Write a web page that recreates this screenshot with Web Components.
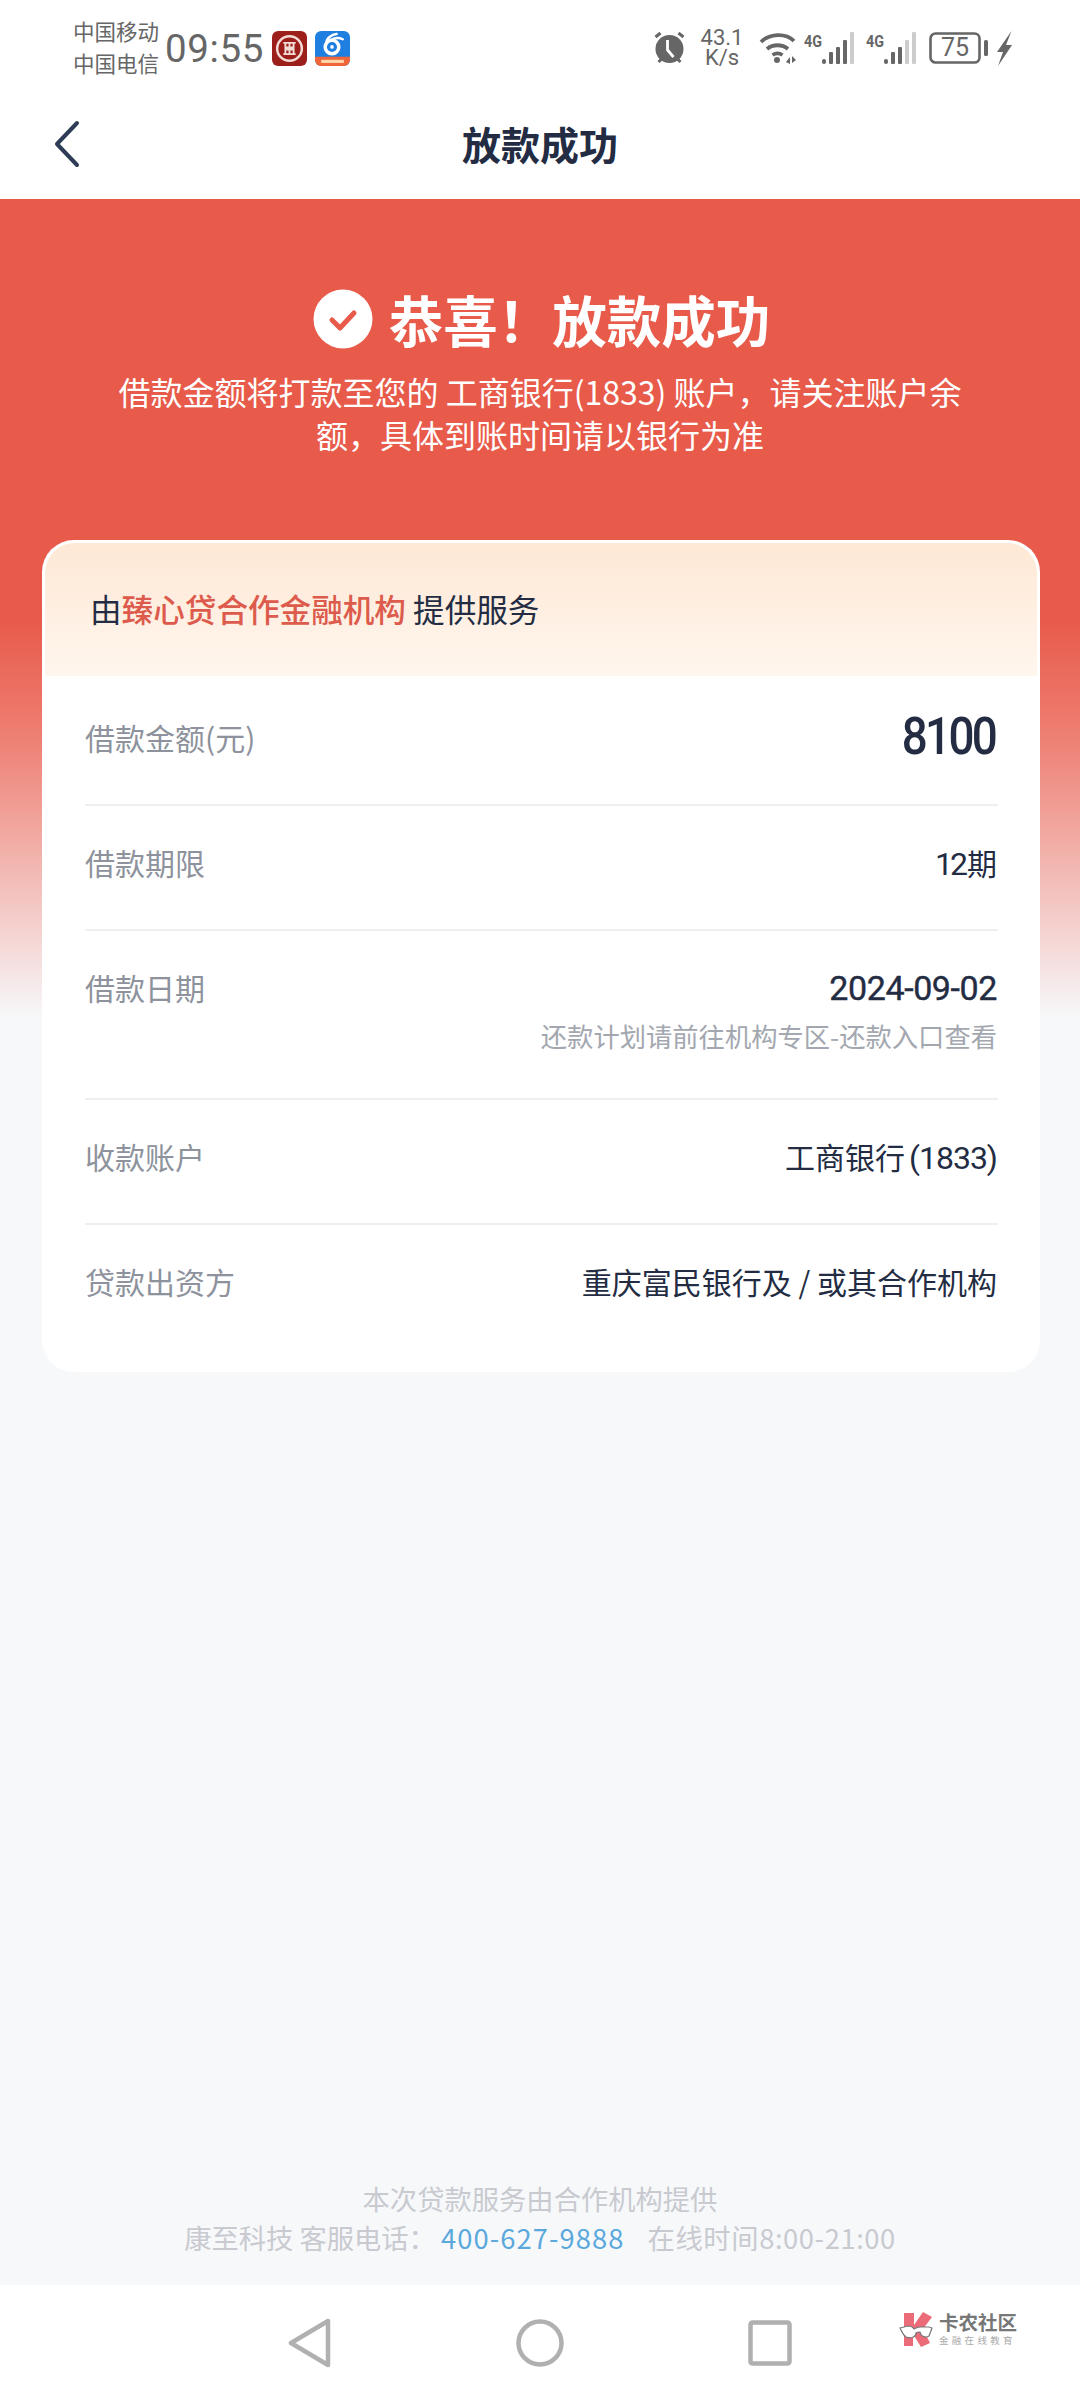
<!DOCTYPE html>
<html lang="zh">
<head>
<meta charset="utf-8">
<title>放款成功</title>
<style>
  html, body { margin: 0; height: 100%; }
  body {
    width: 1080px; height: 2400px; overflow: hidden;
    display: flex; flex-direction: column;
    background: #f7f8fa; color: #232c42;
    font-family: "Noto Sans CJK SC", "Noto Sans", sans-serif;
  }
</style>
</head>
<body>
<status-bar></status-bar>
<page-head>放款成功</page-head>
<loan-page>
  <success-hero slot="hero" title-text="恭喜！放款成功">
    借款金额将打款至您的 工商银行(1833) 账户，请关注账户余额，具体到账时间请以银行为准
  </success-hero>
  <loan-card slot="card" lender="臻心贷合作金融机构">
    <loan-row label="借款金额(元)" tall><loan-num big>8100</loan-num></loan-row>
    <loan-row label="借款期限"><loan-num tight>12</loan-num>期</loan-row>
    <loan-row label="借款日期" note="还款计划请前往机构专区-还款入口查看"><loan-num date>2024-09-02</loan-num></loan-row>
    <loan-row label="收款账户">工商银行<loan-num paren>(1833)</loan-num></loan-row>
    <loan-row label="贷款出资方" last>重庆富民银行及 / 或其合作机构</loan-row>
  </loan-card>
  <loan-foot slot="foot"></loan-foot>
</loan-page>
<nav-keys></nav-keys>

<script>
class StatusBar extends HTMLElement {
  constructor() {
    super();
    // five signal bars, the last ones dimmed
    const signal = lit => [5, 12, 17, 24, 32].map((h, i) =>
      `<rect x="${18 + i * 7}" y="${32 - h}" width="4" height="${h}" rx="${i ? 1 : 2}" fill="${i < lit ? '#666' : '#ccc'}"/>`
    ).join('');
    const sim = (lit, left) => `
      <svg width="50" height="32" viewBox="0 0 50 32" style="margin-left:${left}px">
        <text x="0" y="15" font-family="Roboto" font-weight="700" font-size="16" fill="#666" textLength="18" lengthAdjust="spacingAndGlyphs">4G</text>
        ${signal(lit)}
      </svg>`;
    this.attachShadow({mode: 'open'}).innerHTML = `
    <style>
      :host { display: flex; align-items: center; height: 90px; padding: 0 0 0 73px; background: #fff; color: #666; box-sizing: border-box; flex: none; }
      .sim { font-size: 21.5px; line-height: 32px; width: 92px; margin-top: 3px; white-space: nowrap; }
      .time { font: 38.5px/1 Roboto, sans-serif; letter-spacing: .6px; width: 107px; margin-top: 8px; }
      svg { display: block; flex: none; }
      .right { margin-left: auto; display: flex; align-items: center; padding-right: 68px; margin-top: 6px; }
      .speed { font: 22px/20px Roboto, sans-serif; text-align: center; width: 46px; margin: 0 14px 0 12px; }
      .batt { position: relative; margin-left: 13px; }
      .batt span { position: absolute; left: 0; width: 52px; top: 0; text-align: center; font: 25px/32px Roboto, sans-serif; }
    </style>
    <div class="sim">中国移动<br>中国电信</div>
    <div class="time">09:55</div>
    <svg width="35" height="35" viewBox="0 0 34 34" style="margin-top:6px">
      <rect width="34" height="34" rx="6" fill="#9c1f1c"/>
      <circle cx="17" cy="17" r="12" fill="none" stroke="#f4dcd6" stroke-width="2.4"/>
      <path d="M11 11.500h12M11 22.500h12M13 11.500v4.500h8v-4.500M13 22.500V18h8v4.500M17 11.500v11" fill="none" stroke="#f4dcd6" stroke-width="1.800"/>
    </svg>
    <svg width="35" height="35" viewBox="0 0 34 34" style="margin:6px 0 0 8px">
      <defs><clipPath id="a"><rect width="34" height="34" rx="6"/></clipPath></defs>
      <g clip-path="url(#a)">
        <rect width="34" height="34" fill="#1f7fe0"/>
        <rect y="25" width="34" height="9" fill="#f0663a"/>
        <circle cx="16.500" cy="15.500" r="6.600" fill="none" stroke="#fff" stroke-width="3.400"/>
        <circle cx="16.500" cy="15.500" r="1.800" fill="#fff"/>
        <path d="M11 12C11 7 16 3.500 21 3M16 8.500C20 6 24 6.500 27 8" fill="none" stroke="#fff" stroke-width="2.400" stroke-linecap="round"/>
        <rect x="6" y="28" width="22" height="3" fill="#ffd9a8"/>
      </g>
    </svg>
    <div class="right">
      <svg width="35" height="34" viewBox="0 0 34 34">
        <circle cx="17" cy="18" r="14" fill="#666"/>
        <path d="M15 9v10l6 7" fill="none" stroke="#fff" stroke-width="2.800"/>
        <path d="M3 6l5-4M31 6l-5-4M6 31l3-3M28 31l-3-3" stroke="#666" stroke-width="3" fill="none"/>
      </svg>
      <div class="speed">43.1<br>K/s</div>
      <svg width="38" height="32" viewBox="0 0 38 32">
        <path d="M2 10C11 1 27 1 35 9M8 17c6-5 15-5 21 0M13.500 23c3-2 7-2 10 0" fill="none" stroke="#666" stroke-width="3.800"/>
        <circle cx="18" cy="28" r="3" fill="#666"/>
        <path d="M27 30l4-5v7zM33 24l4 4-4 3z" fill="#666"/>
      </svg>
      ${sim(4, 7)}
      ${sim(3, 12)}
      <div class="batt">
        <svg width="59" height="32" viewBox="0 0 59 32">
          <rect x="1.500" y="1.500" width="49" height="29" rx="5" fill="none" stroke="#666" stroke-width="2.600"/>
          <rect x="55" y="8" width="4" height="16" rx="1.500" fill="#666"/>
        </svg>
        <span>75</span>
      </div>
      <svg width="15" height="35" viewBox="0 0 15 35" style="margin-left:9px">
        <path d="M14.500 0L0 21h6L1 35l14-21H9z" fill="#666"/>
      </svg>
    </div>`;
  }
}

class PageHead extends HTMLElement {
  constructor() {
    super();
    this.attachShadow({mode: 'open'}).innerHTML = `
    <style>
      :host { display: flex; align-items: center; justify-content: center; position: relative; height: 109px; background: #fff; flex: none; color: #232c42; }
      svg { position: absolute; left: 52px; top: 30px; }
      .t { font-size: 39px; font-weight: 700; line-height: 1; margin-top: -2px; }
    </style>
    <svg width="30" height="48" viewBox="0 0 30 48"><path d="M25 3L5 24l20 21" fill="none" stroke="#2f3c55" stroke-width="4" stroke-linecap="round" stroke-linejoin="round"/></svg>
    <div class="t"><slot></slot></div>`;
  }
}

class LoanPage extends HTMLElement {
  constructor() {
    super();
    this.attachShadow({mode: 'open'}).innerHTML = `
    <style>
      :host { display: flex; flex-direction: column; flex: 1; min-height: 0; background: linear-gradient(#e85a4a 0, #e85a4a 420px, #ee8074 540px, #f7f8fa 820px); }
      .foot { margin-top: auto; }
    </style>
    <slot name="hero"></slot>
    <slot name="card"></slot>
    <div class="foot"><slot name="foot"></slot></div>`;
  }
}

class SuccessHero extends HTMLElement {
  constructor() {
    super();
    this.attachShadow({mode: 'open'}).innerHTML = `
    <style>
      :host { display: block; height: 341px; box-sizing: border-box; padding-top: 90px; color: #fff; text-align: center; }
      .h { display: flex; justify-content: center; align-items: center; gap: 16px; height: 60px; padding-left: 3px; font-size: 54.500px; font-weight: 700; line-height: 60px; }
      svg { display: block; }
      p { margin: 21px auto 0; width: 860px; font-size: 32px; line-height: 43px; }
    </style>
    <div class="h">
      <svg width="60" height="60" viewBox="0 0 60 60"><circle cx="30" cy="30" r="29.500" fill="#fff"/><path d="M19 31l8 8 14-15" fill="none" stroke="#e85a4a" stroke-width="5" stroke-linecap="round" stroke-linejoin="round"/></svg>
      <span>${this.getAttribute('title-text')}</span>
    </div>
    <p><slot></slot></p>`;
  }
}

class LoanCard extends HTMLElement {
  constructor() {
    super();
    this.attachShadow({mode: 'open'}).innerHTML = `
    <style>
      :host { display: block; margin: 0 40px 0 42px; background: #fff; border-radius: 32px; overflow: hidden; height: 832px; }
      .head { height: 133px; box-sizing: border-box; margin: 3px 3px 0; padding: 0 0 4px 45px; display: flex; align-items: center; white-space: pre;
        border-radius: 30px 30px 0 0; font-size: 31.600px; background: linear-gradient(#fee8d5, #fff6ee); color: #232c42; }
      b { font-weight: 500; color: #dd5b4c; }
      .list { padding: 0 42px 0 43px; }
    </style>
    <div class="head">由<b>${this.getAttribute('lender')}</b> 提供服务</div>
    <div class="list"><slot></slot></div>`;
  }
}

class LoanNum extends HTMLElement {
  constructor() {
    super();
    this.attachShadow({mode: 'open'}).innerHTML = `
    <style>
      :host { font: 400 32px/1 Roboto, sans-serif; letter-spacing: -1px; }
      :host([tight]) { letter-spacing: -3px; margin-right: 2px; }
      :host([paren]) { margin-left: -3px; }
      :host([date]) { font-size: 34px; letter-spacing: -.4px; -webkit-text-stroke: .4px currentColor; }
      :host([big]) { display: block; font-size: 52px; font-weight: 500; letter-spacing: -3px; transform: scaleX(.88); transform-origin: right; margin: -2px 2px 0 0; line-height: 44px; }
    </style>
    <slot></slot>`;
  }
}

class LoanRow extends HTMLElement {
  constructor() {
    super();
    const note = this.getAttribute('note');
    this.attachShadow({mode: 'open'}).innerHTML = `
    <style>
      :host { display: flex; justify-content: space-between; align-items: flex-start; box-sizing: border-box; height: 125px; padding-top: 36px; border-bottom: 2px solid #eeeff1; }
      :host([tall]) { height: 130px; padding-top: 41px; }
      :host([note]) { height: 169px; }
      :host([last]) { border-bottom: 0; }
      .l { color: #8d929c; font-size: 30px; line-height: 40px; }
      .r { text-align: right; color: #232c42; font-size: 30px; line-height: 40px; margin-right: 1px; }
      .n { color: #a3a7af; font-size: 26.300px; line-height: 36px; margin-top: 11px; }
    </style>
    <div class="l">${this.getAttribute('label')}</div>
    <div class="r"><slot></slot>${note ? `<div class="n">${note}</div>` : ''}</div>`;
  }
}

class LoanFoot extends HTMLElement {
  constructor() {
    super();
    this.attachShadow({mode: 'open'}).innerHTML = `
    <style>
      :host { display: block; text-align: center; color: #c8cad0; font-size: 27.300px; line-height: 39px; padding-bottom: 28px; }
      a { color: #5ba8dc; margin: 0 23px 0 5px; letter-spacing: 1.100px; }
      span { letter-spacing: .6px; }
    </style>
    <div>本次贷款服务由合作机构提供</div>
    <div>康至科技 客服电话：<a>400-627-9888</a><span>在线时间8:00-21:00</span></div>`;
  }
}

class NavKeys extends HTMLElement {
  constructor() {
    super();
    this.attachShadow({mode: 'open'}).innerHTML = `
    <style>
      :host { display: flex; position: relative; justify-content: center; align-items: center; gap: 184px; height: 115px; padding-left: 3px; background: #fff; flex: none; }
      svg { display: block; }
      .back { margin-left: -4px; }
      .logo { position: absolute; left: 899px; top: 26px; display: flex; align-items: center; gap: 4px; color: #777; }
      .t1 { font-size: 19.500px; font-weight: 700; line-height: 21px; white-space: nowrap; }
      .t2 { font-size: 9.500px; line-height: 13px; color: #aaa; letter-spacing: 3.300px; white-space: nowrap; margin-top: 2px; }
    </style>
    <svg class="back" width="44" height="50" viewBox="0 0 44 50"><path d="M40 3L3 25l37 22z" fill="none" stroke="#b0b0b0" stroke-width="4.500" stroke-linejoin="round"/></svg>
    <svg width="48" height="48" viewBox="0 0 48 48"><circle cx="24" cy="24" r="21.500" fill="none" stroke="#b0b0b0" stroke-width="4.500"/></svg>
    <svg width="44" height="46" viewBox="0 0 44 46"><rect x="2.500" y="2.500" width="39" height="41" rx="2" fill="none" stroke="#b0b0b0" stroke-width="4.500"/></svg>
    <div class="logo">
      <svg width="36" height="36" viewBox="0 0 36 36">
        <path d="M5 2h10v12l9-13 9 5-9 12 7 14-9 4-8-13v12H5z" fill="#ec6b78"/>
        <path d="M1 17l8-2c5 0 5 2 6 3 2-1 4-2 6-2h9l3 1-3 8c-3 2-8 1-9-4-1 0-3 0-4 1 0 4-5 6-10 4-3-2-4-5-6-9z" fill="#fff" stroke="#777" stroke-width="1.200"/>
      </svg>
      <div><div class="t1">卡农社区</div><div class="t2">金融在线教育</div></div>
    </div>`;
  }
}

customElements.define('status-bar', StatusBar);
customElements.define('page-head', PageHead);
customElements.define('loan-page', LoanPage);
customElements.define('success-hero', SuccessHero);
customElements.define('loan-card', LoanCard);
customElements.define('loan-num', LoanNum);
customElements.define('loan-row', LoanRow);
customElements.define('loan-foot', LoanFoot);
customElements.define('nav-keys', NavKeys);
</script>
</body>
</html>
